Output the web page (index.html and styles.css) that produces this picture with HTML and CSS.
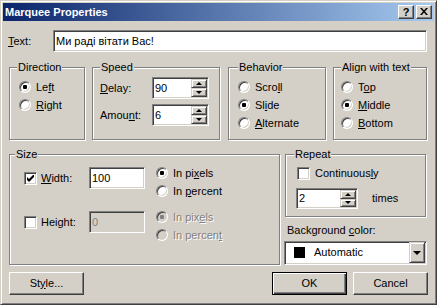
FILE: index.html
```html
<!DOCTYPE html>
<html lang="uk">
<head>
    <meta charset="UTF-8">
    <title>Marquee Properties</title>
    <link rel="stylesheet" href="styles.css">
</head>
<body>
    <div class="window">
        <div class="titlebar">
            <span class="title">Marquee Properties</span>
            <div class="title-buttons">
                <span class="tbtn help">?</span>
                <span class="tbtn close">
                    <svg width="8" height="7" viewBox="0 0 8 7"><path d="M0 0h2l2 2.4 2-2.4h2l-3 3.5 3 3.5h-2l-2-2.4-2 2.4h-2l3-3.5z" fill="#000"/></svg>
                </span>
            </div>
        </div>

        <div class="dialog">
            <div class="text-row">
                <span class="text-label"><u>T</u>ext:</span>
                <div class="field text-field">Ми раді вітати Вас!</div>
            </div>

            <div class="groups-top">
                <div class="group direction">
                    <span class="group-title">Direction</span>
                    <div class="radio-row"><span class="radio checked"></span><span>Le<u>f</u>t</span></div>
                    <div class="radio-row"><span class="radio"></span><span><u>R</u>ight</span></div>
                </div>
                <div class="group speed">
                    <span class="group-title">Speed</span>
                    <div class="spin-row">
                        <span class="spin-label"><u>D</u>elay:</span>
                        <div class="field spin"><span class="spin-value">90</span><div class="spin-buttons"><span class="sbtn up"></span><span class="sbtn down"></span></div></div>
                    </div>
                    <div class="spin-row second">
                        <span class="spin-label">Amou<u>n</u>t:</span>
                        <div class="field spin"><span class="spin-value">6</span><div class="spin-buttons"><span class="sbtn up"></span><span class="sbtn down"></span></div></div>
                    </div>
                </div>
                <div class="group behavior">
                    <span class="group-title">Behavior</span>
                    <div class="radio-row"><span class="radio"></span><span>Scro<u>l</u>l</span></div>
                    <div class="radio-row"><span class="radio checked"></span><span>Sl<u>i</u>de</span></div>
                    <div class="radio-row"><span class="radio"></span><span><u>A</u>lternate</span></div>
                </div>
                <div class="group align">
                    <span class="group-title">Align with text</span>
                    <div class="radio-row"><span class="radio"></span><span>T<u>o</u>p</span></div>
                    <div class="radio-row"><span class="radio checked"></span><span><u>M</u>iddle</span></div>
                    <div class="radio-row"><span class="radio"></span><span><u>B</u>ottom</span></div>
                </div>
            </div>

            <div class="groups-bottom">
                <div class="group size">
                    <span class="group-title">Size</span>
                    <div class="size-row">
                        <span class="check checked"><svg width="7" height="7" viewBox="0 0 7 7"><path d="M0 2 2 4 7 -1 7 2 2 7 0 5z" fill="#000"/></svg></span>
                        <span class="size-label"><u>W</u>idth:</span>
                        <div class="field size-field">100</div>
                        <div class="radio-col">
                            <div class="radio-row"><span class="radio checked"></span><span>In pi<u>x</u>els</span></div>
                            <div class="radio-row"><span class="radio"></span><span>In <u>p</u>ercent</span></div>
                        </div>
                    </div>
                    <div class="size-row second">
                        <span class="check"></span>
                        <span class="size-label">Height:</span>
                        <div class="field size-field disabled">0</div>
                        <div class="radio-col disabled">
                            <div class="radio-row"><span class="radio checked"></span><span>In pix<u>e</u>ls</span></div>
                            <div class="radio-row"><span class="radio"></span><span>In percen<u>t</u></span></div>
                        </div>
                    </div>
                </div>

                <div class="right-col">
                    <div class="group repeat">
                        <span class="group-title">Repeat</span>
                        <div class="check-row"><span class="check"></span><span class="check-label">Continuous<u>l</u>y</span></div>
                        <div class="times-row">
                            <div class="field spin repeat-spin"><span class="spin-value">2</span><div class="spin-buttons"><span class="sbtn up"></span><span class="sbtn down"></span></div></div>
                            <span class="times">times</span>
                        </div>
                    </div>
                    <div class="bg-label">Background <u>c</u>olor:</div>
                    <div class="field combo">
                        <span class="swatch"></span>
                        <span class="combo-text">Automatic</span>
                        <span class="combo-btn"></span>
                    </div>
                </div>
            </div>

            <div class="buttons">
                <div class="btn">St<u>y</u>le...</div>
                <div class="btn default">OK</div>
                <div class="btn cancel">Cancel</div>
            </div>
        </div>
    </div>
</body>
</html>
```

FILE: styles.css
```css
* {
    box-sizing: border-box;
}
body {
    margin: 0;
    font-family: "Liberation Sans", Arial, sans-serif;
    font-size: 11px;
    line-height: 13px;
    color: #000;
    background: #d4d0c8;
}
u {
    text-decoration: underline;
}

/* window frame */
.window {
    width: 437px;
    height: 305px;
    background: #d4d0c8;
    border: 1px solid;
    border-color: #d4d0c8 #404040 #404040 #d4d0c8;
    box-shadow: inset 1px 1px #fff, inset -1px -1px #808080;
    padding: 2px;
    display: flex;
    flex-direction: column;
}
.titlebar {
    height: 18px;
    display: flex;
    align-items: center;
    padding: 0 2px 0 2px;
    background: linear-gradient(to right, #0a246a, #a6caf0);
}
.title {
    color: #fff;
    font-weight: bold;
}
.title-buttons {
    margin-left: auto;
    display: flex;
    gap: 2px;
}
.tbtn {
    width: 16px;
    height: 14px;
    background: #d4d0c8;
    border: 1px solid;
    border-color: #fff #404040 #404040 #fff;
    box-shadow: inset -1px -1px #808080;
    display: flex;
    align-items: center;
    justify-content: center;
    font-weight: bold;
    font-size: 11px;
}
.tbtn svg {
    margin-left: -1px;
    margin-top: -1px;
}

/* dialog body */
.dialog {
    flex: 1;
    display: flex;
    flex-direction: column;
    padding: 9px 6px 0 6px;
}
.field {
    background: #fff;
    border: 1px solid;
    border-color: #808080 #fff #fff #808080;
    box-shadow: inset 1px 1px #404040, inset -1px -1px #d4d0c8;
    display: flex;
    align-items: center;
    padding: 0 2px;
}
.field.disabled {
    background: #d4d0c8;
    color: #808080;
}
.text-row {
    display: flex;
    align-items: center;
    height: 22px;
}
.text-label {
    width: 44px;
    margin-left: -1px;
    padding-left: 0;
}
.text-field {
    width: 374px;
    height: 22px;
    margin-left: 1px;
}

/* group boxes */
.group {
    position: relative;
    border: 1px solid #808080;
    box-shadow: inset 1px 1px #fff, 1px 1px #fff;
}
.group-title {
    position: absolute;
    top: -7px;
    left: 7px;
    padding: 0 1px;
    background: #d4d0c8;
}
.groups-top {
    display: flex;
    margin-top: 15px;
    height: 73px;
}
.direction {
    width: 76px;
    padding: 10px 0 0 9px;
}
.speed {
    width: 128px;
    margin-left: 7px;
    padding: 9px 0 0 7px;
}
.behavior {
    width: 98px;
    margin-left: 8px;
    padding: 10px 0 0 9px;
}
.behavior .group-title {
    left: 9px;
}
.align {
    width: 94px;
    margin-left: 7px;
    padding: 10px 0 0 7px;
}

/* radios and checks */
.radio-row {
    display: flex;
    align-items: center;
    height: 18px;
}
.radio {
    position: relative;
    flex: none;
    width: 12px;
    height: 12px;
    border-radius: 50%;
    background: #fff;
    border: 1px solid;
    border-color: #808080 #fff #fff #808080;
    box-shadow: inset 1px 1px #404040, inset -1px -1px #d4d0c8;
    margin-right: 5px;
}
.radio.checked::after {
    content: "";
    position: absolute;
    left: 3px;
    top: 3px;
    width: 4px;
    height: 4px;
    border-radius: 1px;
    background: #000;
}
.disabled .radio {
    background: #d4d0c8;
}
.disabled .radio.checked::after {
    background: #808080;
}
.radio-col.disabled span {
    color: #808080;
    text-shadow: 1px 1px #fff;
}
.radio-col.disabled .radio {
    text-shadow: none;
}
.check {
    flex: none;
    width: 13px;
    height: 13px;
    background: #fff;
    border: 1px solid;
    border-color: #808080 #fff #fff #808080;
    box-shadow: inset 1px 1px #404040, inset -1px -1px #d4d0c8;
    display: flex;
    align-items: center;
    justify-content: center;
}

/* spin boxes */
.spin-row {
    display: flex;
    align-items: center;
    height: 22px;
}
.spin-row.second {
    margin-top: 5px;
}
.spin-label {
    width: 52px;
}
.spin {
    width: 57px;
    height: 22px;
    padding: 0 0 0 2px;
}
.spin-value {
    flex: 1;
}
.spin-buttons {
    display: flex;
    flex-direction: column;
    width: 16px;
    height: 18px;
    margin: 0 1px 0 auto;
}
.sbtn {
    height: 9px;
    background: #d4d0c8;
    border: 1px solid;
    border-color: #d4d0c8 #404040 #404040 #d4d0c8;
    box-shadow: inset 1px 1px #fff, inset -1px -1px #808080;
    display: flex;
    align-items: center;
    justify-content: center;
}
.sbtn.up::after {
    content: "";
    border-left: 3px solid transparent;
    border-right: 3px solid transparent;
    border-bottom: 3px solid #000;
}
.sbtn.down::after {
    content: "";
    border-left: 3px solid transparent;
    border-right: 3px solid transparent;
    border-top: 3px solid #000;
}

/* size and repeat */
.groups-bottom {
    display: flex;
    margin-top: 14px;
    height: 111px;
}
.size {
    width: 271px;
    height: 111px;
    padding: 12px 0 0 14px;
}
.size .group-title {
    left: 5px;
}
.size-row {
    display: flex;
    align-items: center;
    height: 22px;
}
.size-row.second {
    margin-top: 22px;
}
.size-label {
    width: 52px;
    padding-left: 4px;
}
.size-field {
    width: 56px;
    height: 22px;
}
.radio-col {
    align-self: flex-start;
    margin: -3px 0 0 11px;
}
.right-col {
    width: 143px;
    margin-left: 4px;
    display: flex;
    flex-direction: column;
}
.repeat {
    width: 141px;
    height: 64px;
    margin-left: 1px;
    padding: 12px 0 0 11px;
}
.repeat .group-title {
    left: 8px;
}
.check-row {
    display: flex;
    align-items: center;
    height: 13px;
}
.check-label {
    margin-left: 5px;
}
.times-row {
    display: flex;
    align-items: center;
    margin-top: 8px;
}
.repeat-spin {
    width: 62px;
    height: 21px;
    margin-left: -1px;
}
.repeat-spin .spin-buttons {
    height: 17px;
}
.repeat-spin .sbtn {
    height: 8.5px;
}
.times {
    margin-left: 14px;
}
.bg-label {
    margin-top: 7px;
    padding-left: 3px;
}
.combo {
    margin-top: 4px;
    height: 25px;
    padding: 0 0 0 9px;
}
.swatch {
    width: 11px;
    height: 11px;
    background: #000;
}
.combo-text {
    margin-left: 9px;
}
.combo-btn {
    margin: 0 1px 0 auto;
    width: 16px;
    height: 21px;
    background: #d4d0c8;
    border: 1px solid;
    border-color: #d4d0c8 #404040 #404040 #d4d0c8;
    box-shadow: inset 1px 1px #fff, inset -1px -1px #808080;
    display: flex;
    align-items: center;
    justify-content: center;
}
.combo-btn::after {
    content: "";
    border-left: 4px solid transparent;
    border-right: 4px solid transparent;
    border-top: 4px solid #000;
}

/* bottom buttons */
.buttons {
    display: flex;
    margin-top: 7px;
}
.btn {
    width: 75px;
    height: 23px;
    background: #d4d0c8;
    border: 1px solid;
    border-color: #fff #404040 #404040 #fff;
    box-shadow: inset -1px -1px #808080;
    display: flex;
    align-items: center;
    justify-content: center;
}
.btn.default {
    margin-left: auto;
    border: 1px solid #000;
    box-shadow: inset 1px 1px #fff, inset -1px -1px #404040, inset -2px -2px #808080;
}
.btn.cancel {
    margin-left: 6px;
}
```
